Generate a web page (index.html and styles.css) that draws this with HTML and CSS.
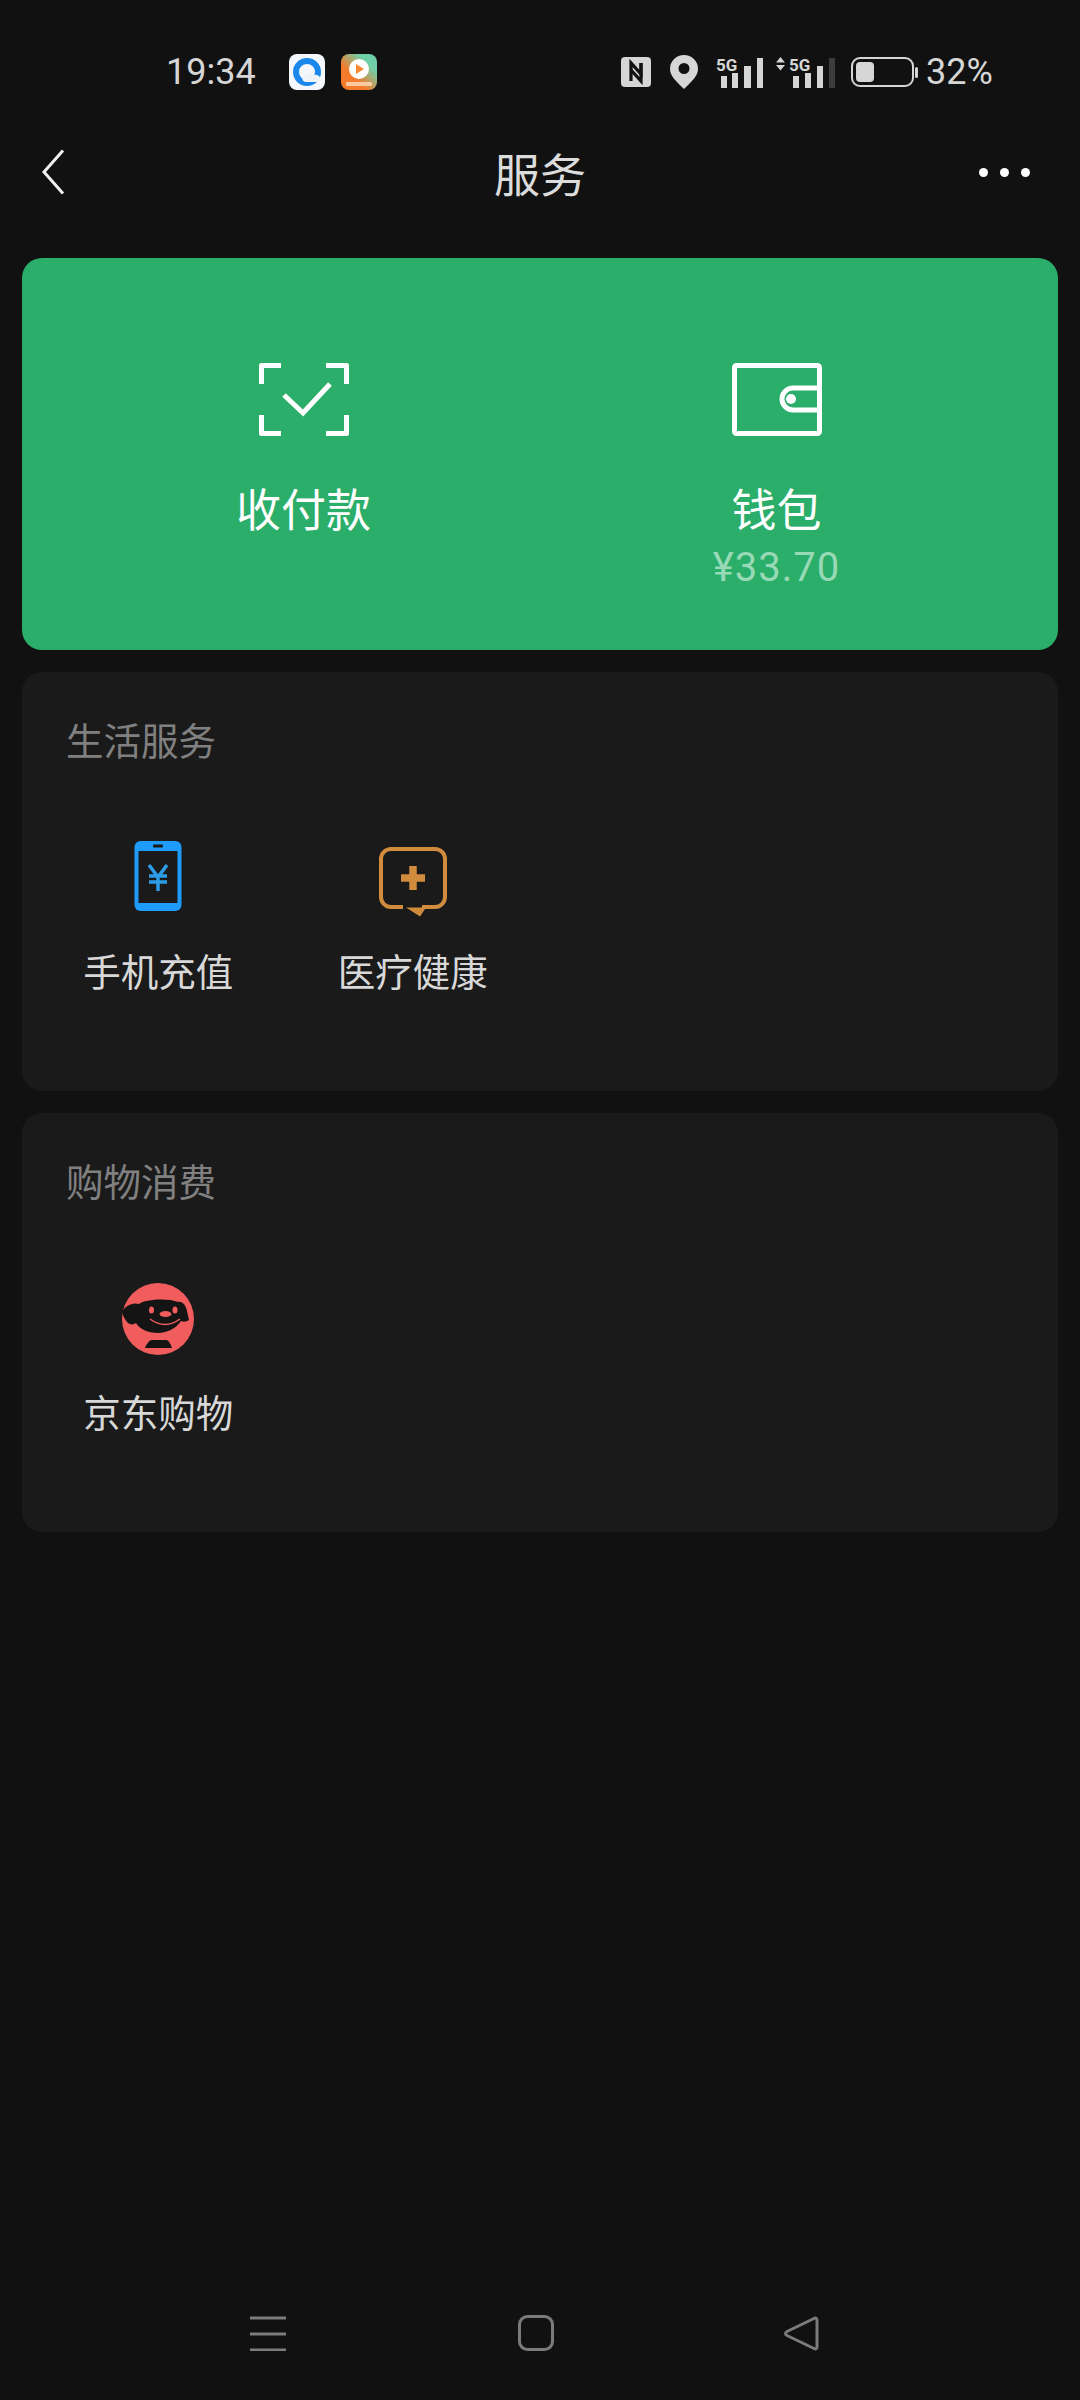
FILE: index.html
```html
<!DOCTYPE html>
<html lang="zh-CN">
<head>
<meta charset="utf-8">
<title>服务</title>
<link rel="stylesheet" href="styles.css">
</head>
<body>
<div class="page">
  <div class="status">
    <span class="time">19:34</span>
    <svg class="app" viewBox="0 0 36 36">
      <rect width="36" height="36" rx="8" fill="#f4f8fc"/>
      <circle cx="18" cy="18" r="11" fill="none" stroke="#1b87ea" stroke-width="6"/>
      <path d="M17 28c-4 0-5-5-1-6 1-4 7-4 9-1 4-1 7 2 6 5-1 2-2 2-4 2z" fill="#eef3f9"/>
    </svg>
    <svg class="app" viewBox="0 0 36 36">
      <defs><linearGradient id="appg" x1="0" y1="1" x2="1" y2="0"><stop offset=".35" stop-color="#f47a2c"/><stop offset=".75" stop-color="#6fd0a8"/></linearGradient></defs>
      <rect width="36" height="36" rx="8" fill="url(#appg)"/>
      <circle cx="18" cy="15" r="10" fill="#fff"/>
      <path d="M15 10l8 5-8 5z" fill="#f58a32"/>
      <rect x="5" y="28" width="26" height="4" rx="1" fill="#f9c9a0"/>
    </svg>
    <div class="sys">
      <svg class="i-nfc" viewBox="0 0 30 30">
        <rect width="30" height="30" rx="4" fill="#d6d6d6"/>
        <path d="M10 24V6l10 11V6" fill="none" stroke="#111" stroke-width="3.2"/>
        <path d="M20 6v18L10 13" fill="none" stroke="#111" stroke-width="3.2"/>
      </svg>
      <svg class="i-pin" viewBox="0 0 28 34">
        <path fill-rule="evenodd" d="M14 34C6 26 0 21 0 14a14 14 0 0 1 28 0c0 7-6 12-14 20zm0-15a5.500 5.500 0 1 0 0-11 5.500 5.500 0 0 0 0 11z" fill="#d6d6d6"/>
      </svg>
      <svg class="i-sig1" viewBox="0 0 47 32">
        <text class="g5" x="0" y="15">5G</text>
        <rect x="5" y="20" width="6" height="12" fill="#d6d6d6"/>
        <rect x="16" y="17" width="6" height="15" fill="#d6d6d6"/>
        <rect x="28" y="10" width="7" height="22" fill="#d6d6d6"/>
        <rect x="41" y="2" width="6" height="30" fill="#d6d6d6"/>
      </svg>
      <svg class="i-sig2" viewBox="0 0 59 32">
        <path d="M0 6.500L4.500 1 9 6.500zM0 9l4.500 5.500L9 9z" fill="#d6d6d6"/>
        <text class="g5" x="13" y="15">5G</text>
        <rect x="17" y="20" width="6" height="12" fill="#d6d6d6"/>
        <rect x="29" y="17" width="6" height="15" fill="#d6d6d6"/>
        <rect x="41" y="10" width="6" height="22" fill="#d6d6d6"/>
        <rect x="53" y="2" width="6" height="30" fill="#3d3d3d"/>
      </svg>
      <svg class="i-bat" viewBox="0 0 67 30">
        <rect x="1" y="1" width="61" height="28" rx="8" fill="none" stroke="#d6d6d6" stroke-width="2"/>
        <rect x="5" y="5" width="18" height="20" rx="4" fill="#d6d6d6"/>
        <rect x="64" y="10" width="3" height="11" rx="1.500" fill="#d6d6d6"/>
      </svg>
      <span class="pct">32%</span>
    </div>
  </div>

  <header class="bar">
    <svg class="back" viewBox="0 0 24 46"><path d="M22 1.500L3 23l19 21.500" fill="none" stroke="#f0f0f0" stroke-width="3"/></svg>
    <h1 class="title">服务</h1>
    <div class="more"><i></i><i></i><i></i></div>
  </header>

  <main class="cards">
    <section class="hero">
      <div class="hero-item">
        <svg class="hero-icon" viewBox="0 0 90 73">
          <path d="M22 2.500H2.500V21M67 2.500h20.500V21M22 70.500H2.500V52M67 70.500h20.500V52" fill="none" stroke="#fff" stroke-width="5" stroke-linejoin="round"/>
          <path d="M25 32l19 18 27-29" fill="none" stroke="#fff" stroke-width="5"/>
        </svg>
        <div class="hero-label">收付款</div>
      </div>
      <div class="hero-item">
        <svg class="hero-icon" viewBox="0 0 90 73">
          <rect x="2.500" y="2.500" width="85" height="68" rx="2" fill="none" stroke="#fff" stroke-width="5"/>
          <path d="M87.500 25H61a11 11 0 0 0 0 22h26.500" fill="none" stroke="#fff" stroke-width="5"/>
          <circle cx="59" cy="36" r="5" fill="#fff"/>
        </svg>
        <div class="hero-label">钱包</div>
        <div class="hero-sub">¥33.70</div>
      </div>
    </section>

    <section class="group">
      <h2 class="group-title">生活服务</h2>
      <div class="grid">
        <div class="item">
          <svg class="icon" viewBox="0 0 80 80">
            <rect x="16.500" y="3" width="47" height="70" rx="6" fill="#1f9bfa"/>
            <rect x="20.500" y="13" width="39" height="52" fill="#1a1a1a"/>
            <rect x="35" y="6.500" width="10" height="3" rx="1" fill="#1a1a1a"/>
            <path d="M31 27l9 12 9-12M31 38h18M31 44h18M40 38v15" fill="none" stroke="#2c9ce8" stroke-width="3.500"/>
          </svg>
          <div class="label">手机充值</div>
        </div>
        <div class="item">
          <svg class="icon" viewBox="0 0 80 80">
            <path d="M30 69H18a10 10 0 0 1-10-10V21a10 10 0 0 1 10-10h44a10 10 0 0 1 10 10v38a10 10 0 0 1-10 10H49" fill="none" stroke="#d08c3c" stroke-width="4"/>
            <path d="M33 69.500h20l-6 9z" fill="#d08c3c"/>
            <path d="M40 28v24M28 40h24" fill="none" stroke="#d08c3c" stroke-width="7.500"/>
          </svg>
          <div class="label">医疗健康</div>
        </div>
      </div>
    </section>

    <section class="group">
      <h2 class="group-title">购物消费</h2>
      <div class="grid">
        <div class="item">
          <svg class="icon" viewBox="10 9 80 80">
            <circle cx="50" cy="49" r="36" fill="#f15d5d"/>
            <path d="M14 42c3-6 10-10 17-8 6-5 30-6 39-2 4-1 8 3 9 9l2 9c-3 2-6 2-8 1-5 8-15 12-23 12s-18-3-22-10c-4 3-10 2-14-11z" fill="#141414"/>
            <ellipse cx="43.500" cy="40" rx="2.500" ry="3.500" fill="#f15d5d"/>
            <ellipse cx="67" cy="40" rx="2.500" ry="3.500" fill="#f15d5d"/>
            <ellipse cx="57.500" cy="44" rx="6" ry="3" fill="#f15d5d"/>
            <path d="M42 49q15 11 30 0" fill="none" stroke="#f15d5d" stroke-width="1.500"/>
            <path d="M44 70h14c3 0 5 5 6 8H37c1-3 4-8 7-8z" fill="#141414"/>
          </svg>
          <div class="label">京东购物</div>
        </div>
      </div>
    </section>
  </main>

  <nav class="nav">
    <svg class="n-menu" viewBox="0 0 36 35"><path d="M0 2h36M0 18h36M0 34h36" stroke="#7b7b7b" stroke-width="3"/></svg>
    <svg class="n-home" viewBox="0 0 36 36"><rect x="1.500" y="1.500" width="33" height="33" rx="8" fill="none" stroke="#7b7b7b" stroke-width="3"/></svg>
    <svg class="n-back" viewBox="0 0 35 35"><path d="M30 2.500c2-1 3 0 3 2v26c0 2-1 3-3 2L3 19.500c-2-1-2-3 0-4z" fill="none" stroke="#7b7b7b" stroke-width="3"/></svg>
  </nav>
</div>
</body>
</html>
```

FILE: styles.css
```css
* { box-sizing: border-box; }
html, body { margin: 0; padding: 0; background: #111111; }
body { font-family: "Noto Sans CJK SC", "Noto Sans", Roboto, sans-serif; }
.page { width: 1080px; height: 2400px; display: flex; flex-direction: column; background: #111111; overflow: hidden; }

.status { display: flex; align-items: center; height: 64px; margin-top: 40px; padding: 0 84px 0 166px; color: #d6d6d6; }
.time { font: 400 36px/1 Roboto, sans-serif; width: 87px; margin-right: 36px; white-space: nowrap; }
.app { width: 36px; height: 36px; margin-right: 16px; }
.sys { margin-left: auto; display: flex; align-items: center; }
.i-nfc { width: 30px; height: 30px; margin-right: 19px; }
.i-pin { width: 28px; height: 34px; margin-right: 18px; }
.i-sig1 { width: 47px; height: 32px; margin-right: 13px; }
.i-sig2 { width: 59px; height: 32px; margin-right: 16px; }
.i-bat { width: 67px; height: 30px; margin-right: 8px; }
.g5 { font: 700 17px Roboto, sans-serif; fill: #d6d6d6; }
.pct { font: 400 36px/1 Roboto, sans-serif; width: 70px; white-space: nowrap; }

.bar { position: relative; display: flex; align-items: center; justify-content: space-between; height: 136px; padding: 0 50px 0 41px; }
.back { width: 24px; height: 46px; }
.title { position: absolute; left: 0; right: 0; margin: 0; text-align: center; font-size: 46px; font-weight: 400; line-height: 60px; color: #dcdcdc; }
.more { display: flex; gap: 12px; }
.more i { width: 9px; height: 9px; border-radius: 50%; background: #fff; }

.cards { display: flex; flex-direction: column; gap: 22px; padding: 18px 22px 0; }
.hero { display: grid; grid-template-columns: 1fr 1fr; height: 392px; padding: 105px 45px 0; background: #2bae6a; border-radius: 20px; }
.hero-item { display: flex; flex-direction: column; align-items: center; }
.hero-icon { width: 90px; height: 73px; }
.hero-label { margin-top: 42px; font-size: 45px; line-height: 60px; color: #fff; }
.hero-sub { margin-top: 5px; font: 400 40px/50px Roboto, sans-serif; letter-spacing: 1px; color: #98d9b6; }

.group { height: 419px; padding: 42px 9px 0; background: #1a1a1a; border-radius: 20px; }
.group-title { margin: 0 0 0 35px; font-size: 37.500px; font-weight: 400; line-height: 50px; color: #808080; }
.grid { display: grid; grid-template-columns: repeat(4, 1fr); margin-top: 74px; }
.item { display: flex; flex-direction: column; align-items: center; }
.icon { width: 80px; height: 80px; }
.label { margin-top: 27px; font-size: 37.500px; line-height: 50px; color: #d8d8d8; white-space: nowrap; }

.nav { margin-top: auto; display: flex; align-items: center; padding: 0 0 49px 250px; }
.n-menu { width: 36px; height: 35px; margin-right: 232px; }
.n-home { width: 36px; height: 36px; margin-right: 230px; }
.n-back { width: 35px; height: 35px; }
```
